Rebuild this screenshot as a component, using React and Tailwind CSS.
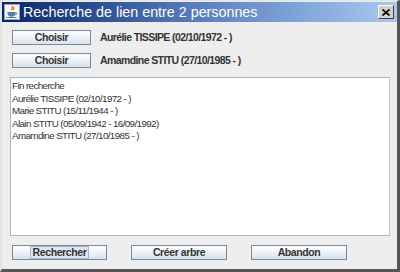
import React from 'react';

const font = { fontFamily: '"Liberation Sans", Arial, sans-serif' };

const JavaIcon = () => (
    <svg width="16" height="16" viewBox="0 0 16 16" className="shrink-0">
        <rect x="0.5" y="0.5" width="15" height="15" fill="#f4f4f4" stroke="#9aa8c0" />
        <path d="M8 2c1.5 1.5-1 2.5 0 4.2M9.6 3c1 1-0.6 1.8 0.2 3" stroke="#e76f00" strokeWidth="1.2" fill="none" />
        <path d="M3.5 8h8v1.5c0 2-1.8 3.2-4 3.2s-4-1.2-4-3.2z" fill="#5382a1" />
        <path d="M11.5 8.6c1.6 0 1.6 2 0 2.2" stroke="#5382a1" strokeWidth="1" fill="none" />
        <rect x="2.5" y="13" width="10" height="1" fill="#5382a1" />
    </svg>
);

const Button = ({ children, width, focused }) => (
    <button
        className={`h-[15px] ${width} shrink-0 flex items-center justify-center border border-[#7a8a99] bg-gradient-to-b from-[#ffffff] to-[#d8e3ee] text-[10.5px] tracking-[-0.4px] font-bold text-[#333333] leading-none`}
        style={font}
    >
        {focused ? (
            <span className="px-[2px] h-[13px] flex items-center border border-[#a3b8cc] bg-[#dce6f0]">{children}</span>
        ) : (
            children
        )}
    </button>
);

const lines = [
    'Fin recherche',
    'Aurélie TISSIPE (02/10/1972 - )',
    'Marie STITU (15/11/1944 - )',
    'Alain STITU (05/09/1942 - 16/09/1992)',
    'Amamdine STITU (27/10/1985 - )',
];

export default function App() {
    return (
        <div className="w-[400px] h-[272px] flex flex-col bg-[#eeeeee] border-l-2 border-t border-[#e4e4e4] border-r-[3px] border-r-[#555555] border-b-[3px] border-b-[#555555]" style={font}>
            {/* Title bar */}
            <div className="h-[20px] mt-[1px] flex items-center pl-[2px] pr-[3px] bg-gradient-to-r from-[#0a246a] via-[#5a7fbf] to-[#a6caf0]">
                <JavaIcon />
                <span className="ml-[3px] text-white text-[14.3px] leading-none">
                    Recherche de lien entre 2 personnes
                </span>
                <div className="ml-auto w-[16px] h-[14px] flex items-center justify-center bg-[#d4d0c8] border border-t-white border-l-white border-r-[#404040] border-b-[#404040]">
                    <svg width="8" height="7" viewBox="0 0 8 7">
                        <path d="M0.5 0.5l7 6M7.5 0.5l-7 6" stroke="#000" strokeWidth="1.6" />
                    </svg>
                </div>
            </div>

            {/* Body */}
            <div className="flex-1 flex flex-col pl-[8px] pr-[7px] pt-[8px]">
                <div className="h-[15px] flex items-center pl-[2px]">
                    <Button width="w-[79px]">Choisir</Button>
                    <span className="ml-[9px] text-[10.5px] tracking-[-0.6px] leading-none font-bold text-[#333333]">Aurélie TISSIPE (02/10/1972 - )</span>
                </div>
                <div className="h-[15px] flex items-center pl-[2px] mt-[8px]">
                    <Button width="w-[79px]">Choisir</Button>
                    <span className="ml-[9px] text-[10.5px] tracking-[-0.6px] leading-none font-bold text-[#333333]">Amamdine STITU (27/10/1985 - )</span>
                </div>

                <div className="mt-[9px] h-[159px] bg-white border border-[#a3b8cc] border-r-[#b8c4d0] px-[1px] pt-[2px]">
                    {lines.map((l) => (
                        <div key={l} className="text-[9.8px] tracking-[-0.6px] leading-[12.5px] text-[#333333]">{l}</div>
                    ))}
                </div>

                <div className="mt-[9px] h-[15px] flex items-center pl-[2px]">
                    <Button width="w-[95px]" focused>Rechercher</Button>
                    <div className="ml-[24px] flex"><Button width="w-[96px]">Créer arbre</Button></div>
                    <div className="ml-[24px] flex"><Button width="w-[96px]">Abandon</Button></div>
                </div>
            </div>
        </div>
    );
}
